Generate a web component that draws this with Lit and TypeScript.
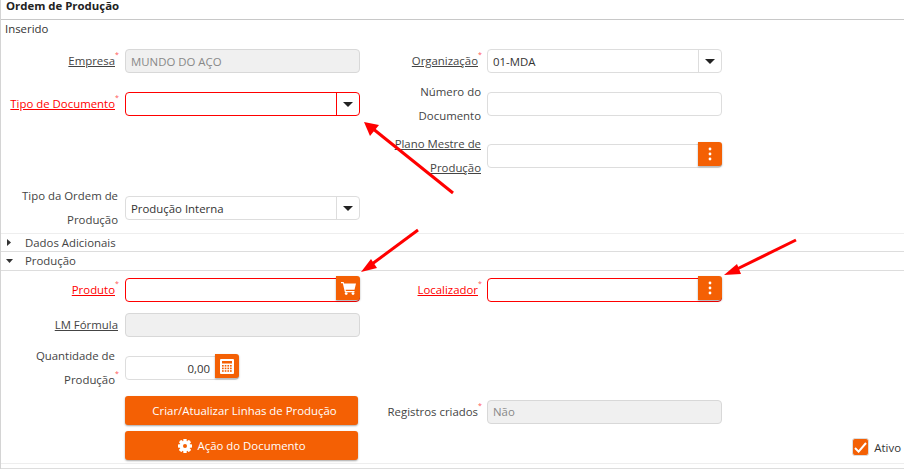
import { LitElement, html, css, svg } from "lit";
import { customElement } from "lit/decorators.js";

const caret = html`<svg class="caret" width="10" height="5" viewBox="0 0 10 5"><path d="M0 0h10L5 5z" fill="#222"/></svg>`;
const dots = html`<svg width="4" height="14" viewBox="0 0 4 14" fill="#fff"><circle cx="2" cy="2" r="1.4"/><circle cx="2" cy="7" r="1.4"/><circle cx="2" cy="12" r="1.4"/></svg>`;
const cart = html`<svg width="15" height="13" viewBox="0 0 15 13" fill="#fff"><path d="M0 0h2.6l.5 1.5H15l-1.5 6.2H4.6l.3 1.3h8.6v1.2H3.9L1.8 1.2H0z"/><circle cx="5.2" cy="11.6" r="1.4"/><circle cx="12" cy="11.6" r="1.4"/></svg>`;
const calc = html`<svg width="14" height="15" viewBox="0 0 14 15"><rect width="14" height="15" rx="1" fill="#fff"/><rect x="2" y="2" width="10" height="2.5" fill="#f46004"/>${[6, 8.6, 11.2].map((y) => [2, 4.7, 7.4, 10].map((x) => svg`<rect x="${x}" y="${y}" width="1.7" height="1.6" fill="#f46004"/>`))}</svg>`;
const gear = html`<svg width="14" height="14" viewBox="0 0 14 14" fill="#fff">${[0, 45, 90, 135].map((a) => svg`<rect x="5.3" y="0" width="3.4" height="14" rx=".6" transform="rotate(${a} 7 7)"/>`)}<path fill-rule="evenodd" d="M7 1.8a5.2 5.2 0 1 0 0 10.4A5.2 5.2 0 0 0 7 1.8zm0 3.2a2 2 0 1 1 0 4 2 2 0 0 1 0-4z"/><circle cx="7" cy="7" r="2" fill="#f46004"/></svg>`;

@customElement("app-root")
export class AppRoot extends LitElement {
  static styles = css`
    :host { display: block; width: 904px; height: 469px; overflow: hidden; position: relative; background: #fff; box-sizing: border-box; border-left: 1px solid #d4d4d4; font-family: "Open Sans", "Noto Sans", sans-serif; font-size: 11.4px; color: #444; }
    .title { height: 19px; border-bottom: 1px solid #c8c8c8; padding-left: 5px; font-weight: 700; color: #222; line-height: 12px; }
    .status { height: 18px; line-height: 18px; padding-left: 4px; color: #333; }
    .grid { display: grid; grid-template-columns: 361px 1fr; }
    .top { margin-top: 8px; grid-template-rows: 30px 48px 48px 48px; row-gap: 4px; height: 187px; border-bottom: 1px solid #eee; }
    .bottom { padding-top: 4px; grid-template-rows: 30px 39px 48px 39px 31px; border-bottom: 1px solid #eee; height: 193px; box-sizing: border-box; }
    .field { display: grid; grid-template-columns: 117px 235px; column-gap: 7px; align-items: center; }
    .r { grid-column: 2; grid-template-columns: 119px 235px; column-gap: 6px; }
    .label { text-align: right; line-height: 24px; }
    .req { padding-right: 3px; }
    .link { text-decoration: underline; }
    .err { color: #f00; }
    sup { position: absolute; color: #f55; font-size: 7px; line-height: 7px; margin-top: 2px; }
    .input { position: relative; box-sizing: border-box; height: 24px; border: 1px solid #ddd; border-radius: 4px; display: flex; align-items: center; padding-left: 5px; color: #333; background: #fff; }
    .input.dis { background: #f0f0f0; color: #888; border-color: #d8d8d8; }
    .input.bad { border-color: #f00; }
    .drop { position: absolute; right: 0; top: 0; bottom: 0; width: 22px; border-left: 1px solid #ddd; display: flex; align-items: center; justify-content: center; }
    .bad .drop { border-left-color: #f00; }
    .caret { display: block; }
    .btn { position: absolute; right: -1px; top: -3px; width: 24px; height: 24px; background: #f46004; border-radius: 0 3px 3px 0; box-shadow: 0 1px 2px rgba(0,0,0,.35); display: flex; align-items: center; justify-content: center; }
    .qty { width: 114px; justify-content: flex-end; padding-right: 28px; }
    .section { height: 18px; line-height: 18px; display: flex; align-items: center; border-bottom: 1px solid #ddd; color: #444; }
    .s1 { height: 17px; }
    .tri { width: 24px; display: flex; justify-content: center; padding-right: 8px; box-sizing: border-box; }
    .action { box-sizing: border-box; margin-left: 124px; width: 233px; height: 29px; background: #f46004; color: #fff; border-radius: 3px; box-shadow: 0 1px 2px rgba(0,0,0,.35); display: flex; align-items: center; justify-content: center; gap: 6px; }
    .a1 { align-self: start; margin-top: 4px; padding-left: 6px; }
    .a2 { align-self: start; margin-top: 0; }
    .ativo { grid-column: 2; justify-self: end; align-self: start; margin-top: 7px; margin-right: 3px; display: flex; align-items: center; gap: 5px; color: #333; }
    .check { box-sizing: border-box; width: 17px; height: 18px; border-radius: 3px; background: #f46004; border: 1px solid #ddd; display: flex; align-items: center; justify-content: center; }
    .end { height: 4px; border-bottom: 1px solid #ddd; }
    .arrows { position: absolute; left: -1px; top: 0; pointer-events: none; }
  `;

  private label(text: string, o: { req?: boolean; link?: boolean; err?: boolean } = {}) {
    const cls = `${o.link ? "link" : ""} ${o.err ? "err" : ""}`;
    return html`<div class="label ${o.req ? "req" : ""}"><span class=${cls}>${text}</span>${o.req ? html`<sup>*</sup>` : ""}</div>`;
  }

  render() {
    return html`
      <div class="title">Ordem de Produção</div>
      <div class="status">Inserido</div>
      <div class="grid top">
        <div class="field">${this.label("Empresa", { req: true, link: true })}<div class="input dis">MUNDO DO AÇO</div></div>
        <div class="field r">${this.label("Organização", { req: true, link: true })}<div class="input">01-MDA<div class="drop">${caret}</div></div></div>
        <div class="field">${this.label("Tipo de Documento", { req: true, link: true, err: true })}<div class="input bad"><div class="drop">${caret}</div></div></div>
        <div class="field r">${this.label("Número do Documento")}<div class="input"></div></div>
        <div class="field r">${this.label("Plano Mestre de Produção", { link: true })}<div class="input"><div class="btn">${dots}</div></div></div>
        <div class="field" style="grid-column:1">${this.label("Tipo da Ordem de Produção")}<div class="input">Produção Interna<div class="drop">${caret}</div></div></div>
      </div>
      <div class="section s1"><span class="tri"><svg width="4" height="7" viewBox="0 0 4 7"><path d="M0 0l4 3.5L0 7z" fill="#333"/></svg></span>Dados Adicionais</div>
      <div class="section"><span class="tri"><svg width="7" height="4" viewBox="0 0 7 4"><path d="M0 0h7L3.5 4z" fill="#333"/></svg></span>Produção</div>
      <div class="grid bottom">
        <div class="field">${this.label("Produto", { req: true, link: true, err: true })}<div class="input bad"><div class="btn">${cart}</div></div></div>
        <div class="field r">${this.label("Localizador", { req: true, link: true, err: true })}<div class="input bad"><div class="btn">${dots}</div></div></div>
        <div class="field" style="grid-column:1">${this.label("LM Fórmula", { link: true })}<div class="input dis"></div></div>
        <div class="field" style="grid-column:1">${this.label("Quantidade de Produção", { req: true })}<div class="input qty">0,00<div class="btn">${calc}</div></div></div>
        <div class="action a1" style="grid-column:1">Criar/Atualizar Linhas de Produção</div>
        <div class="field r">${this.label("Registros criados", { req: true })}<div class="input dis">Não</div></div>
        <div class="action a2" style="grid-column:1">${gear}<span>Ação do Documento</span></div>
        <div class="ativo"><span class="check"><svg width="13" height="11" viewBox="0 0 13 11"><path d="M1 6l3.6 3.6L12 1" fill="none" stroke="#fff" stroke-width="2"/></svg></span>Ativo</div>
      </div>
      <div class="end"></div>
      <svg class="arrows" width="904" height="469" viewBox="0 0 904 469">
        <g stroke="#f00" stroke-width="3" fill="none"><path d="M453 193L372 128"/><path d="M418 230L368 267"/><path d="M796 240L733 271"/></g>
        <g fill="#f00"><path d="M364 122L379 125L370 136z"/><path d="M361 272L371 259L377 268z"/><path d="M724 275L737 264L741 274z"/></g>
      </svg>
    `;
  }
}
